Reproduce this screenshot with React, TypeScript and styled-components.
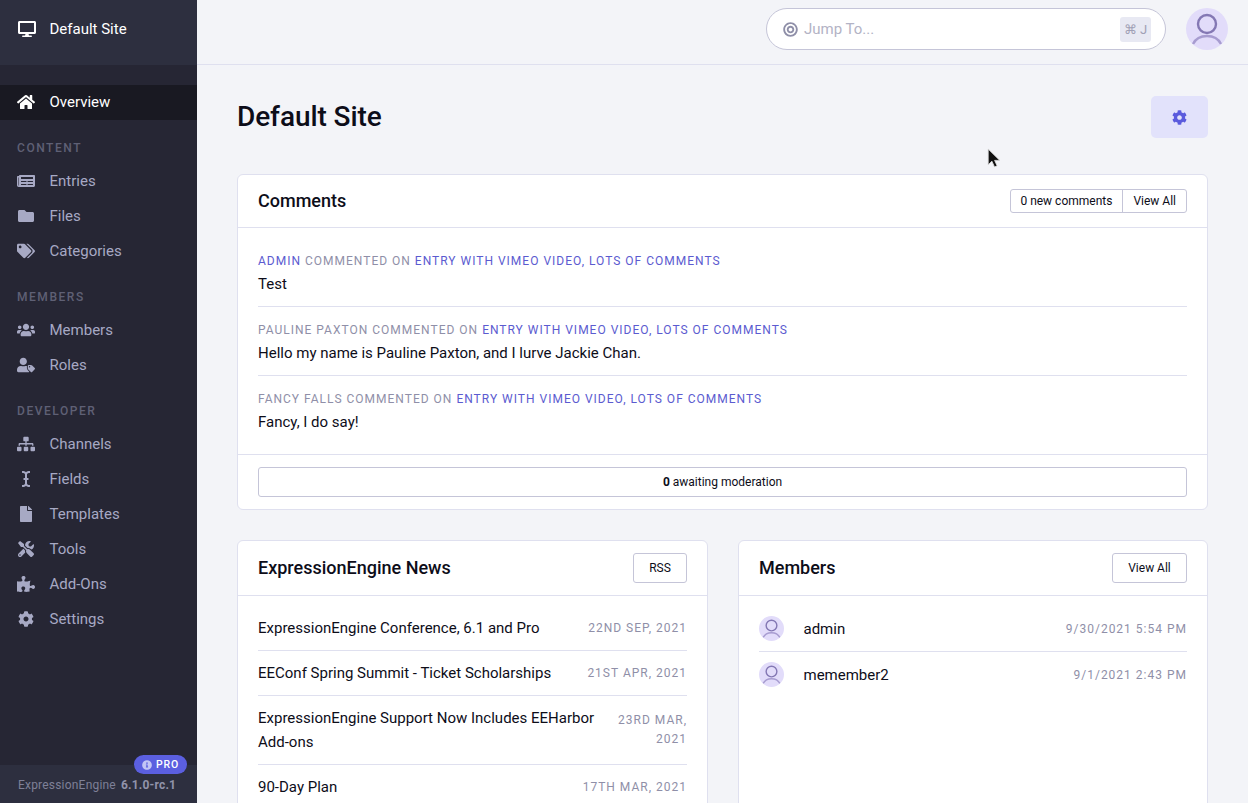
import styled, { createGlobalStyle } from 'styled-components'
import type { ReactNode } from 'react'
import {
  FaDesktop, FaHome, FaNewspaper, FaFolder, FaTags, FaUsers, FaUserTag, FaSitemap,
  FaICursor, FaFile, FaTools, FaPuzzlePiece, FaCog, FaBullseye, FaInfoCircle,
} from 'react-icons/fa'

const GlobalStyle = createGlobalStyle`
  html, body { margin: 0; padding: 0; height: 100%; overflow: hidden; }
  body { font-family: Roboto, "Liberation Sans", sans-serif; color: #0d0d19; background: #f3f4f8; }
  * { box-sizing: border-box; }
`

const Shell = styled.div`
  display: flex;
  width: 1248px;
  height: 803px;
  overflow: hidden;
  position: relative;
`

const Sidebar = styled.aside`
  width: 197px;
  flex: none;
  height: 803px;
  background: #262634;
  display: flex;
  flex-direction: column;
  position: relative;
`

const SiteRow = styled.div`
  height: 65px;
  flex: none;
  background: #2d2f3f;
  color: #fff;
  display: flex;
  align-items: center;
  padding: 0 17px 8px 18px;
  font-size: 15px;
  svg { width: 18px; height: 16px; margin-right: 13.5px; flex: none; }
`

const Nav = styled.nav`
  flex: 1;
  padding-top: 20px;
`

const NavItem = styled.div<{ $active?: boolean }>`
  height: 35px;
  display: flex;
  align-items: center;
  padding: 0 0 2px 17px;
  font-size: 15px;
  color: ${p => (p.$active ? '#fff' : '#a7a9c4')};
  background: ${p => (p.$active ? '#191922' : 'transparent')};
`

const NavIcon = styled.span`
  width: 18px;
  height: 18px;
  margin-right: 14.5px;
  flex: none;
  display: flex;
  align-items: center;
  justify-content: center;
  svg { width: 18px; height: 16px; }
`

const NavHeading = styled.div`
  height: 14px;
  margin: 21px 0 9px;
  padding-left: 17px;
  font-size: 12px;
  font-weight: 500;
  letter-spacing: 1.55px;
  color: #5f6075;
  display: flex;
  align-items: center;
`

const SideFooter = styled.div`
  height: 38px;
  flex: none;
  background: #2d2f3f;
  color: #7e8097;
  font-size: 12px;
  letter-spacing: 0.2px;
  padding: 2px 18px 0;
  display: flex;
  align-items: center;
  position: relative;
  b { margin-left: 5px; font-weight: 700; color: #9193aa; white-space: nowrap; }
`

const ProBadge = styled.div`
  position: absolute;
  right: 10px;
  top: -10px;
  height: 19px;
  width: 53px;
  border-radius: 10px;
  background: #5b5fe0;
  color: #fff;
  font-size: 10.5px;
  font-weight: 500;
  letter-spacing: 0.8px;
  display: flex;
  align-items: center;
  justify-content: center;
  gap: 4px;
  svg { width: 10px; height: 10px; color: #c3c5f5; }
`

const Main = styled.main`
  flex: 1;
  min-width: 0;
  display: flex;
  flex-direction: column;
`

const TopBar = styled.header`
  height: 65px;
  flex: none;
  border-bottom: 1px solid #dfe0ef;
  display: flex;
  align-items: center;
  justify-content: flex-end;
  padding: 0 20px 6px;
  gap: 20px;
`

const JumpBox = styled.div`
  width: 400px;
  height: 42px;
  border: 1px solid #c5c5d8;
  border-radius: 21px;
  background: #fff;
  display: flex;
  align-items: center;
  padding: 0 14px 0 16px;
  color: #b3b3c5;
  font-size: 15px;
  svg { width: 15px; height: 15px; margin-right: 6px; color: #8f8fa8; }
`

const JumpText = styled.span`
  flex: 1;
`

const Shortcut = styled.span`
  width: 31px;
  height: 25px;
  border-radius: 3px;
  background: #e8e9f3;
  color: #a0a0b5;
  font-size: 13px;
  display: flex;
  align-items: center;
  justify-content: center;
  gap: 3px;
`

const AvatarCircle = styled.div<{ $size: number }>`
  width: ${p => p.$size}px;
  height: ${p => p.$size}px;
  flex: none;
  svg { display: block; width: 100%; height: 100%; }
`

const Content = styled.div`
  padding: 31px 40px 0;
`

const TitleRow = styled.div`
  height: 42px;
  display: flex;
  align-items: center;
  justify-content: space-between;
  margin-bottom: 36px;
`

const Title = styled.h1`
  margin: 0;
  padding-bottom: 2px;
  font-size: 28px;
  font-weight: 500;
  letter-spacing: -0.08px;
  color: #0d0d19;
`

const GearButton = styled.div`
  width: 57px;
  height: 42px;
  border-radius: 5px;
  background: #e2e2fb;
  color: #5b5bdd;
  display: flex;
  align-items: center;
  justify-content: center;
  svg { width: 15px; height: 15px; }
`

const Card = styled.section`
  background: #fff;
  border: 1px solid #dfe0ef;
  border-radius: 6px;
`

const CardHeader = styled.div`
  height: 53px;
  border-bottom: 1px solid #dfe0ef;
  padding: 0 20px 1px;
  display: flex;
  align-items: center;
  justify-content: space-between;
`

const TallHeader = styled(CardHeader)`
  height: 55px;
  padding-bottom: 0;
`

const CardTitle = styled.h2`
  margin: 0;
  font-size: 18px;
  font-weight: 500;
  color: #0d0d19;
`

const TallTitle = styled(CardTitle)`
  padding-bottom: 2px;
`

const ButtonGroup = styled.div`
  display: flex;
  height: 24px;
  margin-top: 1px;
  border: 1px solid #c5c5d8;
  border-radius: 3px;
  font-size: 12px;
  color: #0d0d19;
`

const GroupPart = styled.span`
  padding: 0 10px;
  display: flex;
  align-items: center;
  &:first-child { padding-left: 9px; }
  & + & { border-left: 1px solid #c5c5d8; }
`

const SmallButton = styled.div<{ $width: number }>`
  width: ${p => p.$width}px;
  height: 30px;
  border: 1px solid #c5c5d8;
  border-radius: 3px;
  font-size: 12px;
  display: flex;
  align-items: center;
  justify-content: center;
`

const CommentList = styled.div`
  padding: 10px 20px 0;
`

const Comment = styled.div`
  height: 69px;
  padding-top: 15px;
  border-bottom: 1px solid #dfe0ef;
  &:last-child { border-bottom: none; height: 78px; }
`

const Meta = styled.div`
  font-size: 12px;
  line-height: 16px;
  letter-spacing: 1px;
  text-transform: uppercase;
  color: #8f8fa8;
  a { color: #5b5bd0; }
`

const CommentBody = styled.div`
  margin-top: 4px;
  font-size: 15px;
  line-height: 22px;
`

const CardFooter = styled.div`
  border-top: 1px solid #dfe0ef;
  padding: 12px 20px;
`

const ModerationBar = styled.div`
  height: 30px;
  border: 1px solid #c5c5d8;
  border-radius: 3px;
  font-size: 12px;
  display: flex;
  align-items: center;
  justify-content: center;
  b { margin-right: 3px; }
`

const Columns = styled.div`
  margin-top: 30px;
  display: grid;
  grid-template-columns: 471px 470px;
  gap: 30px;
  align-items: stretch;
`

const TallCard = styled(Card)`
  height: 400px;
`

const NewsList = styled.div`
  padding: 10px 20px 0;
`

const NewsRow = styled.div`
  display: flex;
  justify-content: space-between;
  align-items: center;
  padding: 10px 0;
  border-bottom: 1px solid #dfe0ef;
  font-size: 15px;
  line-height: 24px;
  gap: 20px;
`

const DateText = styled.span`
  flex: none;
  max-width: 72px;
  font-size: 12px;
  line-height: 19px;
  letter-spacing: 1px;
  text-align: right;
  text-transform: uppercase;
  color: #8f8fa8;
`

const LongDate = styled(DateText)`
  max-width: none;
`

const MemberDate = styled(LongDate)`
  padding-top: 2px;
`

const MemberList = styled.div`
  padding: 10px 20px 0;
`

const MemberRow = styled.div`
  height: 46px;
  display: flex;
  align-items: center;
  font-size: 15px;
  border-bottom: 1px solid #dfe0ef;
  &:last-child { border-bottom-color: transparent; }
`

const MemberName = styled.span`
  margin-left: 19.5px;
  flex: 1;
`

const Pointer = styled.svg`
  position: absolute;
  left: 987px;
  top: 148px;
  width: 15px;
  height: 21px;
`

function UserAvatar({ size }: { size: number }) {
  return (
    <AvatarCircle $size={size}>
      <svg viewBox="0 0 42 42">
        <defs>
          <clipPath id={`clip${size}`}><circle cx="21" cy="21" r="21" /></clipPath>
        </defs>
        <circle cx="21" cy="21" r="21" fill="#e2dcfa" />
        <g clipPath={`url(#clip${size})`} fill="none" stroke="#8478b4" strokeWidth="2.4">
          <circle cx="21" cy="16" r="9" />
          <path d="M7 36c3-6 9-8 14-8s11 2 14 8" stroke="#a79cd0" />
        </g>
      </svg>
    </AvatarCircle>
  )
}

function SideLink({ icon, children, active }: { icon: ReactNode; children: ReactNode; active?: boolean }) {
  return (
    <NavItem $active={active}>
      <NavIcon>{icon}</NavIcon>
      {children}
    </NavItem>
  )
}

const comments = [
  { who: 'Admin', link: true, text: 'Test' },
  { who: 'Pauline Paxton', link: false, text: 'Hello my name is Pauline Paxton, and I lurve Jackie Chan.' },
  { who: 'Fancy Falls', link: false, text: 'Fancy, I do say!' },
]

const news = [
  { title: 'ExpressionEngine Conference, 6.1 and Pro', date: '22nd Sep, 2021' },
  { title: 'EEConf Spring Summit - Ticket Scholarships', date: '21st Apr, 2021' },
  { title: 'ExpressionEngine Support Now Includes EEHarbor Add-ons', date: '23rd Mar, 2021', wrap: true },
  { title: '90-Day Plan', date: '17th Mar, 2021' },
]

export default function App() {
  return (
    <Shell>
      <GlobalStyle />
      <Sidebar>
        <SiteRow><FaDesktop />Default Site</SiteRow>
        <Nav>
          <SideLink active icon={<FaHome />}>Overview</SideLink>
          <NavHeading>CONTENT</NavHeading>
          <SideLink icon={<FaNewspaper />}>Entries</SideLink>
          <SideLink icon={<FaFolder />}>Files</SideLink>
          <SideLink icon={<FaTags />}>Categories</SideLink>
          <NavHeading>MEMBERS</NavHeading>
          <SideLink icon={<FaUsers />}>Members</SideLink>
          <SideLink icon={<FaUserTag />}>Roles</SideLink>
          <NavHeading>DEVELOPER</NavHeading>
          <SideLink icon={<FaSitemap />}>Channels</SideLink>
          <SideLink icon={<FaICursor />}>Fields</SideLink>
          <SideLink icon={<FaFile />}>Templates</SideLink>
          <SideLink icon={<FaTools />}>Tools</SideLink>
          <SideLink icon={<FaPuzzlePiece />}>Add-Ons</SideLink>
          <SideLink icon={<FaCog />}>Settings</SideLink>
        </Nav>
        <SideFooter>
          ExpressionEngine <b>6.1.0-rc.1</b>
          <ProBadge><FaInfoCircle />PRO</ProBadge>
        </SideFooter>
      </Sidebar>
      <Main>
        <TopBar>
          <JumpBox>
            <FaBullseye />
            <JumpText>Jump To...</JumpText>
            <Shortcut><span>⌘</span><span>J</span></Shortcut>
          </JumpBox>
          <UserAvatar size={42} />
        </TopBar>
        <Content>
          <TitleRow>
            <Title>Default Site</Title>
            <GearButton><FaCog /></GearButton>
          </TitleRow>
          <Card>
            <CardHeader>
              <CardTitle>Comments</CardTitle>
              <ButtonGroup>
                <GroupPart>0 new comments</GroupPart>
                <GroupPart>View All</GroupPart>
              </ButtonGroup>
            </CardHeader>
            <CommentList>
              {comments.map(c => (
                <Comment key={c.who}>
                  <Meta>
                    {c.link ? <a>{c.who}</a> : c.who} commented on <a>Entry with Vimeo video, lots of comments</a>
                  </Meta>
                  <CommentBody>{c.text}</CommentBody>
                </Comment>
              ))}
            </CommentList>
            <CardFooter>
              <ModerationBar><b>0</b> awaiting moderation</ModerationBar>
            </CardFooter>
          </Card>
          <Columns>
            <TallCard>
              <TallHeader>
                <TallTitle>ExpressionEngine News</TallTitle>
                <SmallButton $width={54}>RSS</SmallButton>
              </TallHeader>
              <NewsList>
                {news.map(n => (
                  <NewsRow key={n.title}>
                    <span>{n.title}</span>
                    {n.wrap ? <DateText>{n.date}</DateText> : <LongDate>{n.date}</LongDate>}
                  </NewsRow>
                ))}
              </NewsList>
            </TallCard>
            <TallCard>
              <TallHeader>
                <TallTitle>Members</TallTitle>
                <SmallButton $width={75}>View All</SmallButton>
              </TallHeader>
              <MemberList>
                <MemberRow>
                  <UserAvatar size={25} />
                  <MemberName>admin</MemberName>
                  <MemberDate>9/30/2021 5:54 PM</MemberDate>
                </MemberRow>
                <MemberRow>
                  <UserAvatar size={25} />
                  <MemberName>memember2</MemberName>
                  <MemberDate>9/1/2021 2:43 PM</MemberDate>
                </MemberRow>
              </MemberList>
            </TallCard>
          </Columns>
        </Content>
      </Main>
      <Pointer viewBox="0 0 14 20">
        <path d="M1 1v15l3.5-3.5L7 18l2.5-1-2.4-5.2H12z" fill="#111" stroke="#ddd" strokeWidth="0.8" />
      </Pointer>
    </Shell>
  )
}
